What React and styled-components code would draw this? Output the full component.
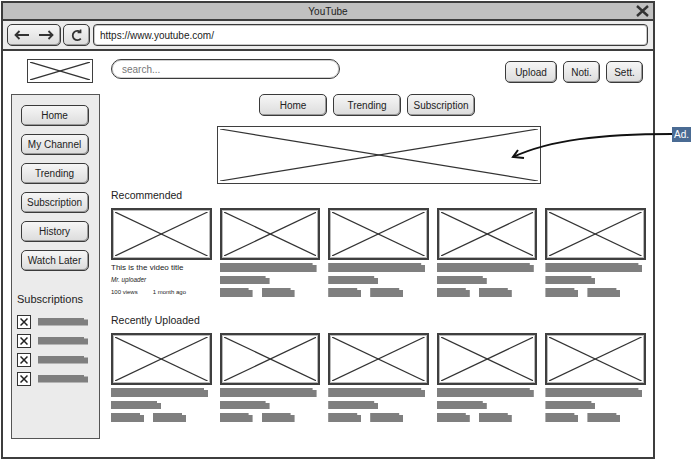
import React from "react";
import styled, {createGlobalStyle} from "styled-components";

const GlobalStyle = createGlobalStyle`
  body {
    margin: 0;
    background: #fff;
    font-family: "Liberation Sans", Arial, sans-serif;
    color: #333;
  }
`;

const Page = styled.div`
  position: relative;
  width: 700px;
  height: 462px;
  overflow: hidden;
`;

const Window = styled.div`
  margin: 1px 0 0 1px;
  width: 654px;
  height: 458px;
  box-sizing: border-box;
  border: 2px solid #3d3d3d;
  display: flex;
  flex-direction: column;
  background: #fff;
`;

const TitleBar = styled.div`
  flex-shrink: 0;
  height: 16px;
  background: #c0c0c0;
  border-bottom: 2px solid #3d3d3d;
  display: grid;
  grid-template-columns: 1fr auto 1fr;
  align-items: center;
  padding: 0 4px;
  font-size: 10px;
  color: #222;
  .close {
    justify-self: end;
    display: flex;
  }
`;

const AddressRow = styled.div`
  flex-shrink: 0;
  height: 28px;
  background: #ececec;
  border-bottom: 2px solid #3d3d3d;
  display: flex;
  align-items: center;
  gap: 2px;
  padding: 0 5px 0 4px;
`;

const Button = styled.div`
  box-sizing: border-box;
  width: ${(p) => p.$w || 68}px;
  height: ${(p) => p.$h || 22}px;
  border: 1.5px solid #3a3a3a;
  border-radius: 5px;
  background: linear-gradient(#f6f6f6, #dcdcdc);
  box-shadow: inset -1px -1px 0 #9a9a9a;
  display: flex;
  align-items: center;
  justify-content: center;
  gap: ${(p) => p.$gap || 0}px;
  font-size: 10px;
  color: #222;
  white-space: nowrap;
  flex-shrink: 0;
`;

const UrlField = styled.div`
  flex: 1;
  margin-left: 1px;
  box-sizing: border-box;
  height: 22px;
  background: #fff;
  border: 1.5px solid #3a3a3a;
  border-radius: 4px;
  box-shadow: inset 0 0 0 1px #c8c8c8;
  display: flex;
  align-items: center;
  padding-left: 6px;
  font-size: 10px;
  color: #222;
`;

const Content = styled.div`
  flex: 1;
  display: flex;
  gap: 11px;
  padding: 8px 7px 0 8px;
  min-height: 0;
`;

const LeftCol = styled.div`
  width: 89px;
  display: flex;
  flex-direction: column;
  flex-shrink: 0;
`;

const Box = styled.div`
  box-sizing: border-box;
  width: ${(p) => (p.$w ? `${p.$w}px` : "auto")};
  height: ${(p) => p.$h}px;
  border: ${(p) => p.$b || 1.5}px solid #3f3f3f;
  box-shadow: ${(p) => (p.$inner ? "inset 0 0 0 1px #b9b9b9" : "none")};
  background: #fff;
  padding: 2px;
  svg {
    display: block;
    width: 100%;
    height: 100%;
  }
`;

const LogoBox = styled(Box)`
  margin-left: 16px;
`;

const Sidebar = styled.div`
  margin-top: 11px;
  height: 345px;
  box-sizing: border-box;
  border: 1.5px solid #555;
  background: #ebebeb;
  padding: 9.5px 0 0 5px;
  display: flex;
  flex-direction: column;
`;

const NavStack = styled.div`
  display: flex;
  flex-direction: column;
  gap: 8px;
  padding-left: 3.5px;
`;

const SubTitle = styled.div`
  margin-top: 21px;
  font-size: 11px;
  line-height: 15px;
  color: #222;
`;

const SubList = styled.div`
  margin-top: 8px;
  display: flex;
  flex-direction: column;
  gap: 5px;
`;

const SubItem = styled.div`
  display: flex;
  align-items: center;
  gap: 7px;
`;

const Check = styled.div`
  box-sizing: border-box;
  width: 14px;
  height: 14px;
  border: 1.5px solid #333;
  background: #fff;
  display: flex;
  align-items: center;
  justify-content: center;
`;

const Bar = styled.div`
  width: ${(p) => p.$w}px;
  height: ${(p) => p.$h || 9}px;
  background: #7f7f7f;
  clip-path: polygon(0 0, calc(100% - 4px) 0, calc(100% - 4px) 2px, 100% 2px, 100% 100%, 0 100%);
`;

const Main = styled.div`
  flex: 1;
  display: flex;
  flex-direction: column;
  min-width: 0;
`;

const TopRow = styled.div`
  height: 24px;
  display: flex;
  justify-content: space-between;
  align-items: flex-start;
`;

const Search = styled.div`
  box-sizing: border-box;
  width: 229px;
  height: 20px;
  border: 1.5px solid #3a3a3a;
  border-radius: 10px;
  box-shadow: inset 0 0 0 1px #cfcfcf;
  background: #fff;
  display: flex;
  align-items: center;
  padding-left: 10px;
  font-size: 10px;
  color: #777;
`;

const ButtonGroup = styled.div`
  display: flex;
  gap: ${(p) => p.$gap || 6}px;
  margin-top: ${(p) => p.$top || 0}px;
  margin-right: ${(p) => p.$right || 0}px;
  padding-left: ${(p) => p.$left || 0}px;
`;

const AdBox = styled(Box)`
  margin-top: 10px;
  align-self: center;
`;

const SectionTitle = styled.div`
  margin-top: ${(p) => p.$top}px;
  font-size: 10.5px;
  line-height: 14px;
  color: #222;
`;

const Grid = styled.div`
  margin-top: 6px;
  display: grid;
  grid-template-columns: repeat(5, 1fr);
  gap: 8px;
`;

const Card = styled.div`
  display: flex;
  flex-direction: column;
`;

const Meta = styled.div`
  margin-top: 3px;
  display: flex;
  flex-direction: column;
  gap: 4px;
`;

const Line = styled.div`
  display: flex;
  gap: ${(p) => p.$gap || 9}px;
  height: ${(p) => p.$h || 9}px;
  line-height: ${(p) => p.$h || 9}px;
  font-size: ${(p) => p.$size || 8}px;
  font-style: ${(p) => (p.$italic ? "italic" : "normal")};
  color: #222;
  white-space: nowrap;
`;

const AdLabel = styled.div`
  position: absolute;
  left: 672px;
  top: 127px;
  width: 19px;
  height: 15px;
  background: #4a6b93;
  color: #fff;
  font-size: 10px;
  display: flex;
  align-items: center;
  justify-content: center;
`;

const Arrow = styled.svg`
  position: absolute;
  left: 505px;
  top: 125px;
  width: 170px;
  height: 40px;
  overflow: visible;
`;

const Cross = () => (
  <svg preserveAspectRatio="none">
    <line x1="0" y1="0" x2="100%" y2="100%" stroke="#333" strokeWidth="1.2" />
    <line x1="0" y1="100%" x2="100%" y2="0" stroke="#333" strokeWidth="1.2" />
  </svg>
);

const Thumb = () => (
  <Box $h={52} $b={2} $inner>
    <Cross />
  </Box>
);

const BarMeta = () => (
  <Meta>
    <Bar $w={97} $h={9} />
    <Bar $w={50} $h={8} />
    <Line $h={9}>
      <Bar $w={33} $h={9} />
      <Bar $w={33} $h={9} />
    </Line>
  </Meta>
);

const sideNav = ["Home", "My Channel", "Trending", "Subscription", "History", "Watch Later"];

export default function App() {
  return (
    <Page>
      <GlobalStyle />
      <Window>
        <TitleBar>
          <span />
          <span>YouTube</span>
          <span className="close">
            <svg width="13" height="12" viewBox="0 0 13 12">
              <path d="M1 1 L12 11 M12 1 L1 11" stroke="#333" strokeWidth="2.4" />
            </svg>
          </span>
        </TitleBar>

        <AddressRow>
          <Button $w={54} $h={22} $gap={8}>
            <svg width="16" height="10" viewBox="0 0 16 10">
              <path d="M15 5 H1.5 M5.5 1 L1.5 5 L5.5 9" stroke="#333" strokeWidth="1.8" fill="none" />
            </svg>
            <svg width="16" height="10" viewBox="0 0 16 10">
              <path d="M1 5 H14.5 M10.5 1 L14.5 5 L10.5 9" stroke="#333" strokeWidth="1.8" fill="none" />
            </svg>
          </Button>
          <Button $w={27} $h={22}>
            <svg width="13" height="13" viewBox="0 0 13 13">
              <path d="M10.5 3.2 A4.6 4.6 0 1 0 10.8 9.6" stroke="#333" strokeWidth="1.8" fill="none" />
              <path d="M7.6 3.4 H10.6 V0.6" stroke="#333" strokeWidth="1.6" fill="none" />
            </svg>
          </Button>
          <UrlField>https://www.youtube.com/</UrlField>
        </AddressRow>

        <Content>
          <LeftCol>
            <LogoBox $w={66} $h={24}>
              <Cross />
            </LogoBox>
            <Sidebar>
              <NavStack>
                {sideNav.map((item) => (
                  <Button key={item} $w={68} $h={21}>
                    {item}
                  </Button>
                ))}
              </NavStack>
              <SubTitle>Subscriptions</SubTitle>
              <SubList>
                {[0, 1, 2, 3].map((i) => (
                  <SubItem key={i}>
                    <Check>
                      <svg width="8" height="8" viewBox="0 0 8 8">
                        <path d="M0.5 0.5 L7.5 7.5 M7.5 0.5 L0.5 7.5" stroke="#222" strokeWidth="1.5" />
                      </svg>
                    </Check>
                    <Bar $w={50} $h={8} />
                  </SubItem>
                ))}
              </SubList>
            </Sidebar>
          </LeftCol>

          <Main>
            <TopRow>
              <Search>search...</Search>
              <ButtonGroup $top={2} $right={3}>
                <Button $w={52}>Upload</Button>
                <Button $w={37}>Noti.</Button>
                <Button $w={37}>Sett.</Button>
              </ButtonGroup>
            </TopRow>

            <ButtonGroup $top={11} $left={148}>
              <Button $w={68}>Home</Button>
              <Button $w={68}>Trending</Button>
              <Button $w={68}>Subscription</Button>
            </ButtonGroup>

            <AdBox $w={324} $h={58}>
              <Cross />
            </AdBox>

            <SectionTitle $top={4}>Recommended</SectionTitle>
            <Grid>
              <Card>
                <Thumb />
                <Meta>
                  <Line $h={9} $size={8}>This is the video title</Line>
                  <Line $h={8} $size={6.3} $italic>Mr. uploader</Line>
                  <Line $h={9} $size={6} $gap={15}>
                    <span>100 views</span>
                    <span>1 month ago</span>
                  </Line>
                </Meta>
              </Card>
              {[1, 2, 3, 4].map((i) => (
                <Card key={i}>
                  <Thumb />
                  <BarMeta />
                </Card>
              ))}
            </Grid>

            <SectionTitle $top={16}>Recently Uploaded</SectionTitle>
            <Grid>
              {[0, 1, 2, 3, 4].map((i) => (
                <Card key={i}>
                  <Thumb />
                  <BarMeta />
                </Card>
              ))}
            </Grid>
          </Main>
        </Content>
      </Window>

      <Arrow viewBox="0 0 170 40">
        <path d="M167 9 C95 9, 45 15, 8 32" stroke="#111" strokeWidth="2" fill="none" />
        <path d="M13 25 L8 32 L19 33" stroke="#111" strokeWidth="2" fill="none" />
      </Arrow>
      <AdLabel>Ad.</AdLabel>
    </Page>
  );
}
